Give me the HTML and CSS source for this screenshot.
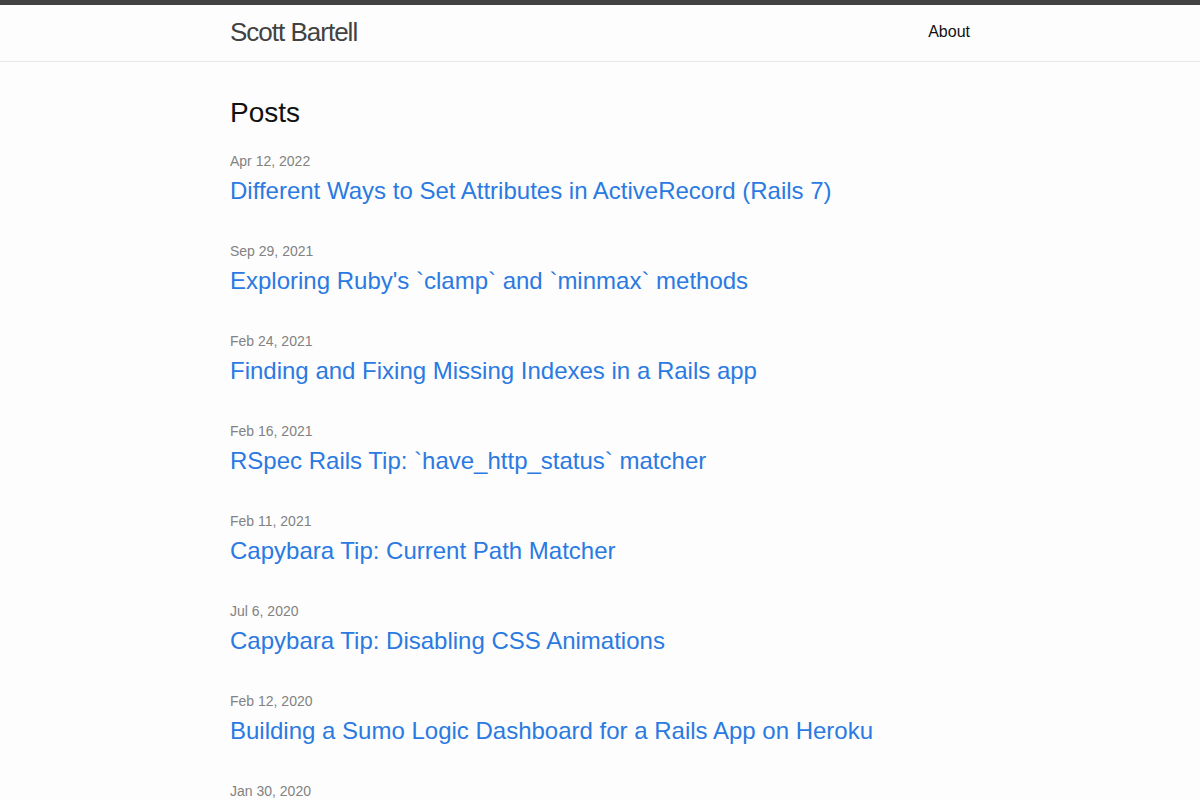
FILE: index.html
```html
<!DOCTYPE html>
<html lang="en">
<head>
    <meta charset="UTF-8">
    <meta name="viewport" content="width=device-width, initial-scale=1.0">
    <title>Scott Bartell</title>
    <link rel="stylesheet" href="styles.css">
</head>
<body>
    <header class="site-header">
        <div class="wrapper header-inner">
            <a class="site-title" href="/">Scott Bartell</a>
            <nav class="site-nav">
                <a class="page-link" href="/about/">About</a>
            </nav>
        </div>
    </header>

    <main class="page-content">
        <div class="wrapper">
            <h1 class="post-list-heading">Posts</h1>
            <ul class="post-list">
                <li>
                    <span class="post-meta">Apr 12, 2022</span>
                    <h3><a class="post-link" href="#">Different Ways to Set Attributes in ActiveRecord (Rails 7)</a></h3>
                </li>
                <li>
                    <span class="post-meta">Sep 29, 2021</span>
                    <h3><a class="post-link" href="#">Exploring Ruby's `clamp` and `minmax` methods</a></h3>
                </li>
                <li>
                    <span class="post-meta">Feb 24, 2021</span>
                    <h3><a class="post-link" href="#">Finding and Fixing Missing Indexes in a Rails app</a></h3>
                </li>
                <li>
                    <span class="post-meta">Feb 16, 2021</span>
                    <h3><a class="post-link" href="#">RSpec Rails Tip: `have_http_status` matcher</a></h3>
                </li>
                <li>
                    <span class="post-meta">Feb 11, 2021</span>
                    <h3><a class="post-link" href="#">Capybara Tip: Current Path Matcher</a></h3>
                </li>
                <li>
                    <span class="post-meta">Jul 6, 2020</span>
                    <h3><a class="post-link" href="#">Capybara Tip: Disabling CSS Animations</a></h3>
                </li>
                <li>
                    <span class="post-meta">Feb 12, 2020</span>
                    <h3><a class="post-link" href="#">Building a Sumo Logic Dashboard for a Rails App on Heroku</a></h3>
                </li>
                <li>
                    <span class="post-meta">Jan 30, 2020</span>
                    <h3><a class="post-link" href="#">Using Rails Credentials</a></h3>
                </li>
            </ul>
        </div>
    </main>
</body>
</html>
```

FILE: styles.css
```css
* {
    margin: 0;
    padding: 0;
    box-sizing: border-box;
}

body {
    font-family: "Liberation Sans", Arial, sans-serif;
    font-size: 16px;
    line-height: 1.5;
    color: #111;
    background-color: #fdfdfd;
}

a {
    text-decoration: none;
}

.wrapper {
    max-width: 800px;
    margin: 0 auto;
    padding: 0 30px;
}

.site-header {
    border-top: 5px solid #424242;
    border-bottom: 1px solid #e8e8e8;
    min-height: 62px;
}

.header-inner {
    display: flex;
    justify-content: space-between;
    align-items: flex-start;
}

.site-title {
    font-size: 26px;
    font-weight: 300;
    line-height: 54px;
    letter-spacing: -1px;
    color: #424242;
}

.site-nav {
    line-height: 54px;
}

.page-link {
    color: #111;
    line-height: 1.5;
}

.page-content {
    padding: 30px 0;
}

.post-list-heading {
    font-size: 28px;
    font-weight: 400;
    margin-bottom: 17px;
}

.post-list {
    list-style: none;
}

.post-list li {
    margin-bottom: 32px;
}

.post-meta {
    display: block;
    font-size: 14px;
    line-height: 21px;
    color: #828282;
}

.post-list h3 {
    font-weight: 400;
    margin-top: 1px;
}

.post-link {
    display: block;
    font-size: 24px;
    line-height: 36px;
    color: #2a7ae2;
}

.post-link:hover {
    text-decoration: underline;
}
```
